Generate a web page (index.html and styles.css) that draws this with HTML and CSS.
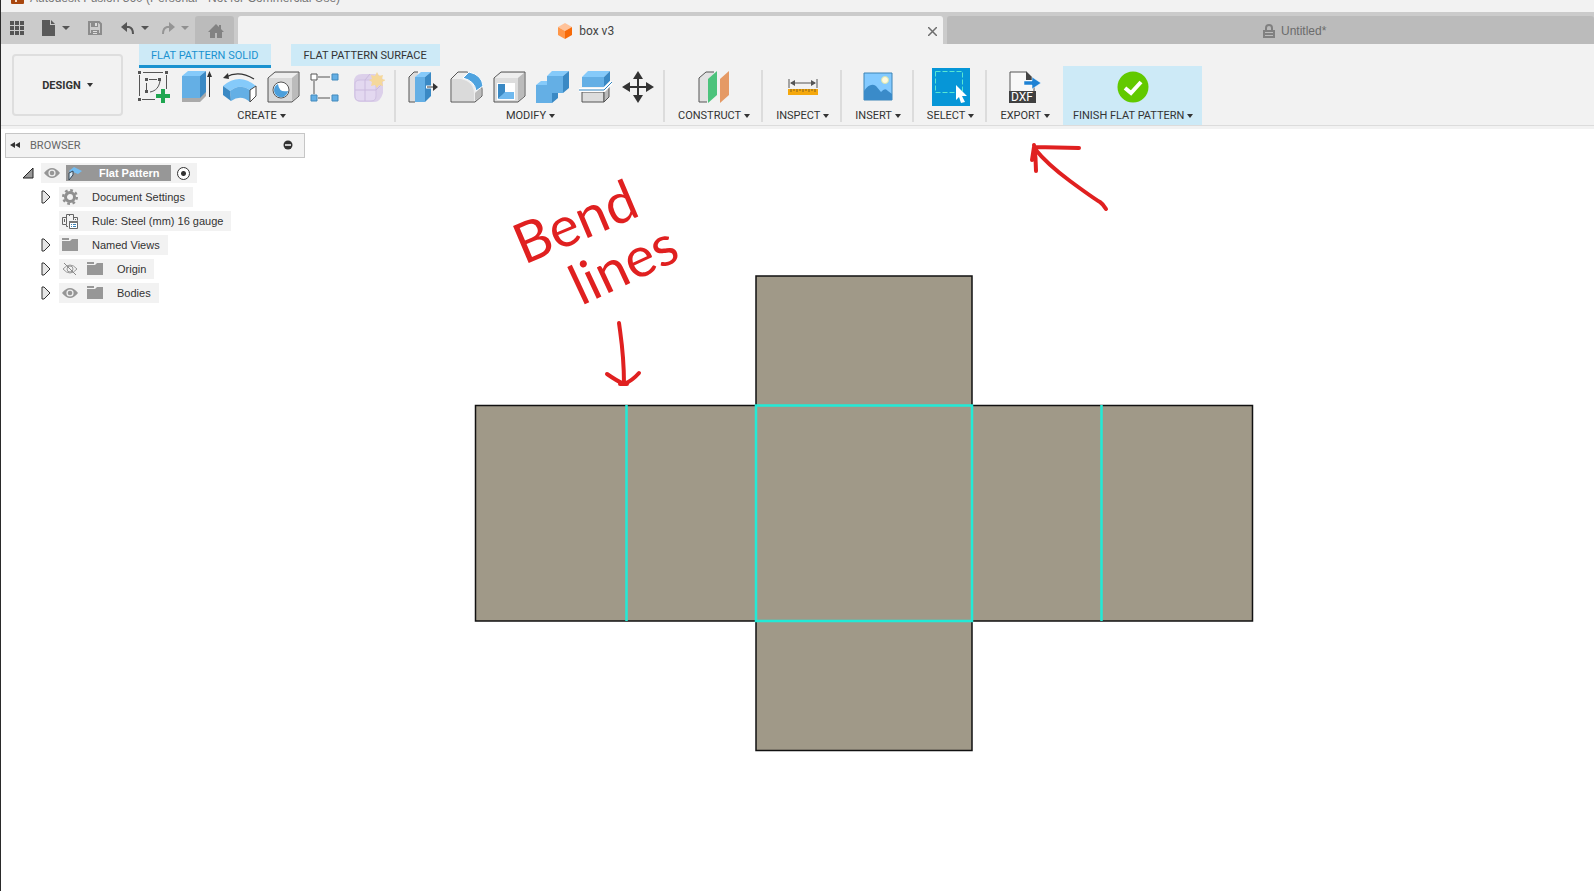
FILE: index.html
```
<!DOCTYPE html>
<html lang="en">
<head>
    <meta charset="UTF-8">
    <meta name="viewport" content="width=device-width, initial-scale=1.0">
    <title>Autodesk Fusion 360</title>
    <link rel="stylesheet" href="styles.css">
</head>
<body>
    <header class="titlebar">
        <svg class="app-icon" width="13" height="13" viewBox="0 0 13 13"><rect width="13" height="13" rx="1" fill="#a8470f"/><path d="M4 3h6v2H6v1h3v2H6v3H4z" fill="#f6d9c6"/></svg>
        <span class="app-title">Autodesk Fusion 360 (Personal - Not for Commercial Use)</span>
    </header>

    <div class="topbar">
        <div class="quick">
            <button class="q-btn q-grid" aria-label="Data panel"><svg width="15" height="15" viewBox="0 0 15 15" fill="#555"><path d="M0 0h4v4H0zM5 0h4v4H5zM10 0h4v4h-4zM0 5h4v4H0zM5 5h4v4H5zM10 5h4v4h-4zM0 10h4v4H0zM5 10h4v4H5zM10 10h4v4h-4z"/></svg></button>
            <button class="q-btn q-file" aria-label="File"><svg width="14" height="16" viewBox="0 0 14 16" fill="#5a5a5a"><path d="M0 0h8v5h5v11H0zM9 0l4 4H9z"/></svg><span class="caret"></span></button>
            <button class="q-btn q-save" aria-label="Save"><svg width="14" height="14" viewBox="0 0 14 14"><path d="M1 1h10l2 2v10H1z" fill="none" stroke="#8c8c8c" stroke-width="2"/><path d="M3 1h7v5H3zM3 9h8v4H3z" fill="#8c8c8c"/><path d="M7 2h2v3H7zM5 10h4v1H5zM5 12h4v1H5z" fill="#ddd"/></svg></button>
            <button class="q-btn q-undo" aria-label="Undo"><svg width="14" height="13" viewBox="0 0 14 13"><path d="M2 5h6q4 1 4 7" fill="none" stroke="#555" stroke-width="2"/><path d="M6 0v10L0 5z" fill="#555"/></svg><span class="caret"></span></button>
            <button class="q-btn q-redo" aria-label="Redo"><svg width="14" height="13" viewBox="0 0 14 13"><path d="M12 5H6Q2 6 2 12" fill="none" stroke="#959595" stroke-width="2"/><path d="M8 0v10l6-5z" fill="#959595"/></svg><span class="caret dim"></span></button>
        </div>
        <button class="home" aria-label="Home"><svg width="16" height="14" viewBox="0 0 16 14" fill="#828282"><path d="M8 0l3 3V1h2v4l3 3h-2v6H9V9H7v5H2V8H0z"/></svg></button>
        <nav class="doc-tabs">
            <div class="doc-tab active">
                <a class="doc-name" href="#"><svg width="15" height="16" viewBox="0 0 15 16"><path d="M7 0l7 4-7 4-7-4z" fill="#ffc299"/><path d="M0 4l7 4v8l-7-4z" fill="#ff9648"/><path d="M14 4L7 8v8l7-4z" fill="#f76a08"/></svg>box v3</a>
                <button class="close" aria-label="Close tab"><svg width="9" height="9" viewBox="0 0 9 9"><path d="M0 0l9 9M9 0L0 9" stroke="#6e6e6e" stroke-width="1.5"/></svg></button>
            </div>
            <div class="doc-tab">
                <a class="doc-name" href="#"><svg width="12" height="15" viewBox="0 0 12 15"><path d="M3 6V4q0-3 3-3t3 3v2" fill="none" stroke="#808080" stroke-width="2"/><path d="M0 6h12v8H0z" fill="#808080"/><path d="M2 8.500h8M2 11.500h8" stroke="#bbb"/></svg>Untitled*</a>
            </div>
        </nav>
    </div>

    <section class="ribbon">
        <button class="design">DESIGN<span class="caret"></span></button>
        <div class="ribbon-main">
            <div class="ribbon-tabs">
                <a class="ribbon-tab active" href="#">FLAT PATTERN SOLID</a>
                <a class="ribbon-tab" href="#">FLAT PATTERN SURFACE</a>
            </div>
            <div class="groups">
                <div class="group create">
                    <div class="tools">
                        <button class="tool" aria-label="Create sketch"><svg width="32" height="32" viewBox="0 0 32 32"><path d="M5 1.500h20M28.500 4v14M1.500 4v21M4 28.500h13M11 8.500h8M8.500 12v7M12 21c6-1 9-5 10-11" fill="none" stroke="#555"/><path d="M0 0h3v3H0zM27 0h3v3h-3zM0 27h3v3H0zM7 7h3v3H7zM20 7h3v3h-3zM7 19h3v3H7z" fill="#555"/><path d="M23 18h4v5h5v4h-5v5h-4v-5h-5v-4h5z" fill="#1fa650"/></svg></button>
                        <button class="tool" aria-label="Extrude"><svg width="32" height="32" viewBox="0 0 32 32"><path d="M1 26h17l7-6v5l-6 6H1z" fill="#aaa"/><path d="M1 5h18v22H1z" fill="#64afe5"/><path d="M1 5l6-5h18l-6 5z" fill="#85cafa"/><path d="M19 5l6-5v21l-6 6z" fill="#3a89c4"/><path d="M28.500 26V3" stroke="#333"/><path d="M28.500 0l2.500 6h-5z" fill="#333"/></svg></button>
                        <button class="tool" aria-label="Bend"><svg width="34" height="32" viewBox="0 0 34 32"><path d="M3 6q13-7 28 2" fill="none" stroke="#333" stroke-width="1.3"/><path d="M0 7l5-5 1 6z" fill="#333"/><path d="M0 15Q16 1 33 15l-6 4Q17 12 7 20z" fill="#85cafa"/><path d="M7 20q10-8 20-1v12q-9-8-19-1z" fill="#64afe5"/><path d="M0 15l7 5 1 10-8-6z" fill="#3a89c4"/><path d="M27 19l6-4v10l-6 6z" fill="#fff" stroke="#444"/></svg></button>
                        <button class="tool" aria-label="Hole"><svg width="33" height="32" viewBox="0 0 33 32"><path d="M1 7l7-6h24v24l-7 6H1z" fill="#d9d9d9" stroke="#555"/><path d="M2 7l6-5h23l-6 5z" fill="#eee"/><path d="M25 7l6-5v23l-6 5z" fill="#bbb"/><circle cx="14" cy="19" r="8" fill="#fff" stroke="#555"/><path d="M11 13q1 9 10 7a7 7 0 1 1-10-7z" fill="#4c9fdb"/></svg></button>
                        <button class="tool" aria-label="Pattern"><svg width="32" height="32" viewBox="0 0 32 32"><path d="M8 6h12M4 10v13M8 27h12" stroke="#555"/><path d="M1 3h6v6H1z" fill="#fff" stroke="#555"/><path d="M22 3h6v6h-6zM1 24h6v6H1zM22 24h6v6h-6z" fill="#64afe5" stroke="#4389bb"/></svg></button>
                        <button class="tool" aria-label="Create form"><svg width="32" height="32" viewBox="0 0 32 32"><path d="M1 11q0-8 8-8h12q9 0 9 8v11q-3 10-10 9H8q-7 0-7-7z" fill="#dcd0ea"/><path d="M2 13q0-4 5-4h11q5 0 5 5v11q0 5-5 5H7q-5 0-5-5z" fill="#e3d8f0" stroke="#cfc0e2"/><path d="M12 9v21M2 19h21l6-6M12 9l5-6" fill="none" stroke="#cbbade"/><path d="M24 1l2 4 4-1-1 4 4 1-4 2 1 4-4-1-2 3-2-3-4 1 1-4-3-2 3-1-1-4 4 1z" fill="#f5d89b"/></svg></button>
                    </div>
                    <button class="menu">CREATE<span class="caret"></span></button>
                </div>
                <div class="group modify">
                    <div class="tools">
                        <button class="tool" aria-label="Press pull"><svg width="32" height="32" viewBox="0 0 32 32"><path d="M11 1H7L2 6v25h6" fill="#ddd" stroke="#555"/><path d="M8 6h10v25H8z" fill="#64afe5"/><path d="M8 6l6-5h10l-6 5z" fill="#85cafa"/><path d="M18 6l6-5v24l-6 6z" fill="#3a89c4"/><path d="M19 16h8" stroke="#fff" stroke-width="3"/><path d="M20 16h8" stroke="#333"/><path d="M26 12l5 4-5 4z" fill="#333"/></svg></button>
                        <button class="tool" aria-label="Fillet"><svg width="33" height="32" viewBox="0 0 33 32"><path d="M1 8l7-7h9q14 3 15 17v7l-7 6H1z" fill="#eee" stroke="#555"/><path d="M2 8h9q13 3 13 15v7H2z" fill="#dadada"/><path d="M25 22l6-6v9l-6 5z" fill="#bdbdbd"/><path d="M13 7l6-6q13 3 14 14l-7 5Q25 10 13 7z" fill="#4fa3df" stroke="#fff"/></svg></button>
                        <button class="tool" aria-label="Shell"><svg width="33" height="32" viewBox="0 0 33 32"><path d="M1 7l7-6h24v24l-7 6H1z" fill="#ddd" stroke="#555"/><path d="M2 7l6-5h23l-6 5z" fill="#eee"/><path d="M25 7l6-5v23l-6 5z" fill="#bbb"/><path d="M4 12h18v17H4z" fill="#fff"/><path d="M5 13h7v9l-7 6z" fill="#3a89c4"/><path d="M12 21h9v7H5z" fill="#70b9ee"/></svg></button>
                        <button class="tool" aria-label="Combine"><svg width="33" height="32" viewBox="0 0 33 32"><path d="M0 14h11V5h16v17H16v10H0z" fill="#64afe5"/><path d="M0 14l5-4h6v4zM11 5l5-5h17l-6 5z" fill="#85cafa"/><path d="M27 5l6-5v17l-6 5zM16 22h6v5l-6 5z" fill="#3a89c4"/></svg></button>
                        <button class="tool" aria-label="Split body"><svg width="33" height="32" viewBox="0 0 33 32"><path d="M3 21h22v10H3z" fill="#ddd" stroke="#555"/><path d="M25 21l5-5v10l-5 5z" fill="#bbb" stroke="#555"/><path d="M3 6h22v10H3z" fill="#64afe5"/><path d="M3 6l6-6h22l-6 6z" fill="#85cafa"/><path d="M25 6l6-6v10l-6 6z" fill="#3a89c4"/><path d="M0 19h25l8-8" fill="none" stroke="#fff" stroke-width="4"/><path d="M0 19h25l8-8" fill="none" stroke="#3184bf"/></svg></button>
                        <button class="tool" aria-label="Move"><svg width="32" height="32" viewBox="0 0 32 32"><path d="M16 6v20M6 16h20" stroke="#333" stroke-width="2"/><path d="M16 0l5 8H11zM16 32l5-8H11zM0 16l8-5v10zM32 16l-8-5v10z" fill="#333"/></svg></button>
                    </div>
                    <button class="menu">MODIFY<span class="caret"></span></button>
                </div>
                <div class="group">
                    <button class="tool" aria-label="Offset plane"><svg width="32" height="32" viewBox="0 0 32 32"><path d="M16 1H8L1 7v24h8" fill="#e2e2e2" stroke="#555"/><path d="M10 8l9-8v24l-9 8z" fill="#4cc37c"/><path d="M22 8l9-8v24l-9 8z" fill="#e59a65"/></svg></button>
                    <button class="menu">CONSTRUCT<span class="caret"></span></button>
                </div>
                <div class="group">
                    <button class="tool" aria-label="Measure"><svg width="30" height="32" viewBox="0 0 30 32"><path d="M1 8v9M29 8v9M3 12h24" stroke="#555"/><path d="M2 12l5-3v6zM28 12l-5-3v6z" fill="#555"/><path d="M0 18h30v6H0z" fill="#f5a80c"/><path d="M3 18v3M6 18v2M9 18v3M12 18v2M15 18v3M18 18v2M21 18v3M24 18v2M27 18v3" stroke="#85621a"/></svg></button>
                    <button class="menu">INSPECT<span class="caret"></span></button>
                </div>
                <div class="group">
                    <button class="tool" aria-label="Insert image"><svg width="30" height="32" viewBox="0 0 30 32"><path d="M1 2h28v27H1z" fill="#83caff" stroke="#3d84b6"/><path d="M1 20q6-9 12-5l5 6q4-5 7-1l4 3v6H1z" fill="#3a8bc9"/><circle cx="22" cy="9" r="3.5" fill="#fff9dc" stroke="#d5e5b0"/></svg></button>
                    <button class="menu">INSERT<span class="caret"></span></button>
                </div>
                <div class="group">
                    <button class="tool select-tool" aria-label="Select"><svg width="38" height="38" viewBox="0 0 38 38"><path d="M3.500 3.500h27v21h-27z" fill="none" stroke="#58e6d1" stroke-dasharray="5 2"/><path d="M24 17l11 11h-5l3 6-4 1-2-6-3 3z" fill="#fff"/></svg></button>
                    <button class="menu">SELECT<span class="caret"></span></button>
                </div>
                <div class="group export">
                    <button class="tool" aria-label="Export DXF"><svg width="33" height="32" viewBox="0 0 33 32"><path d="M1 22V1h16l8 8v13" fill="#f8f8f8" stroke="#555"/><path d="M17 0v9h9z" fill="#444"/><path d="M15 10h8V6l9 6-9 6v-4h-8z" fill="#1f82d4" stroke="#fff" stroke-width=".5"/><path d="M0 20h27v12H0z" fill="#404040"/><text class="dxf" x="2" y="30">DXF</text></svg></button>
                    <button class="menu">EXPORT<span class="caret"></span></button>
                </div>
                <div class="group finish">
                    <button class="tool" aria-label="Finish"><svg width="32" height="32" viewBox="0 0 32 32"><circle cx="16" cy="16" r="15.5" fill="#62c900"/><path d="M8 17l6 5 10-11" fill="none" stroke="#fff" stroke-width="4"/></svg></button>
                    <button class="menu">FINISH FLAT PATTERN<span class="caret"></span></button>
                </div>
            </div>
        </div>
    </section>

    <main class="workspace">
        <svg class="canvas" viewBox="1 129 1593 762">
            <!-- flat pattern faces -->
            <path class="sheet" d="M756 276h216v129.500h280.500v215.500H972v129.500H756V621H475.500V405.500H756z"/>
            <!-- bend lines -->
            <path class="bend" d="M756 405.500h216v215.500H756zM626.500 405v216M1101.500 405v216"/>
            <!-- hand-drawn notes -->
            <path class="ink" d="M619 323C622 345 624 355 624 384M607 374Q617 381 624 384Q632 381 639 373M620 384h7"/>
            <path class="ink" d="M1079 148L1034 147L1032 160M1034 145Q1036 158 1036 171M1035 149Q1047 164 1070 181T1100 202Q1103 204 1106 209"/>
            <text class="note" transform="translate(524 265) rotate(-23)">Bend</text>
            <text class="note" transform="translate(581 306) rotate(-25)">lines</text>
        </svg>

        <aside class="browser">
            <div class="browser-head">
                <svg width="10" height="6" viewBox="0 0 10 6" fill="#333"><path d="M5 0v6L0 3zM10 0v6L5 3z"/></svg>
                <span class="browser-title">BROWSER</span>
                <button class="collapse" aria-label="Hide browser"><svg width="10" height="10" viewBox="0 0 10 10"><circle cx="5" cy="5" r="4.5" fill="#333"/><path d="M2 5h6" stroke="#fff" stroke-width="1.5"/></svg></button>
            </div>
            <ul class="tree">
                <li class="row root">
                    <button class="toggle" aria-label="Collapse"><svg width="12" height="12" viewBox="0 0 12 12"><path d="M11 1v10H1z" fill="#999" stroke="#222"/></svg></button>
                    <div class="chip">
                        <svg width="16" height="16" viewBox="0 0 16 16"><use href="#eye"/></svg>
                        <span class="selected"><svg width="16" height="16" viewBox="0 0 16 16"><path d="M3 6l5-4 8 4-4 3-5-2-2 1z" fill="#73bdf2"/><path d="M3 8l4-2v4l-4 5z" fill="#d5e8f5" stroke="#345"/></svg>Flat Pattern</span>
                        <label class="activate"><input type="radio" name="active" checked aria-label="Activate Flat Pattern"></label>
                    </div>
                </li>
                <li class="row">
                    <button class="toggle" aria-label="Expand"><svg width="10" height="14" viewBox="0 0 10 14"><use href="#arrow"/></svg></button>
                    <div class="chip"><svg width="16" height="16" viewBox="0 0 16 16"><circle cx="8" cy="8" r="4.5" fill="none" stroke="#8f8f8f" stroke-width="3"/><circle cx="8" cy="8" r="6.8" fill="none" stroke="#8f8f8f" stroke-width="2.4" stroke-dasharray="2.7 2.64"/></svg><span class="label">Document Settings</span></div>
                </li>
                <li class="row">
                    <span class="toggle"></span>
                    <div class="chip"><svg width="16" height="16" viewBox="0 0 16 16"><path d="M6 13.500H4.500v-2h-4v-7h4v-3h7v3h4v3M4.500 4v7M11.500 4v3M2.500 6v3M13.500 6v1M7.500 1v2" fill="none" stroke="#666"/><path d="M7.500 8.500h8v7h-8z" fill="#fff" stroke="#666"/><path d="M7 8h9v2H7z" fill="#777"/><path d="M9 11.500h1M11 11.500h3M9 13.500h1M11 13.500h3" stroke="#3b83b8"/></svg><span class="label">Rule: Steel (mm) 16 gauge</span></div>
                </li>
                <li class="row">
                    <button class="toggle" aria-label="Expand"><svg width="10" height="14" viewBox="0 0 10 14"><use href="#arrow"/></svg></button>
                    <div class="chip"><svg width="16" height="16" viewBox="0 0 16 16"><use href="#folder"/></svg><span class="label">Named Views</span></div>
                </li>
                <li class="row">
                    <button class="toggle" aria-label="Expand"><svg width="10" height="14" viewBox="0 0 10 14"><use href="#arrow"/></svg></button>
                    <div class="chip"><svg width="16" height="16" viewBox="0 0 16 16"><path d="M1 8q7-8 14 0-7 8-14 0z" fill="none" stroke="#999"/><circle cx="8" cy="8" r="3" fill="none" stroke="#999"/><path d="M2 2l12 12" stroke="#888"/></svg><svg width="16" height="16" viewBox="0 0 16 16"><use href="#folder"/></svg><span class="label">Origin</span></div>
                </li>
                <li class="row">
                    <button class="toggle" aria-label="Expand"><svg width="10" height="14" viewBox="0 0 10 14"><use href="#arrow"/></svg></button>
                    <div class="chip"><svg width="16" height="16" viewBox="0 0 16 16"><use href="#eye"/></svg><svg width="16" height="16" viewBox="0 0 16 16"><use href="#folder"/></svg><span class="label">Bodies</span></div>
                </li>
            </ul>
        </aside>
    </main>

    <svg class="defs" width="0" height="0">
        <symbol id="eye" viewBox="0 0 16 16"><path d="M0 8q8-10 16 0-8 10-16 0z" fill="#969696"/><circle cx="8" cy="8" r="3.6" fill="#efefef"/><circle cx="8" cy="8" r="2.3" fill="#969696"/></symbol>
        <symbol id="folder" viewBox="0 0 16 16"><path d="M0 1h7v2H0zM0 4h8l2-2h6v12H0z" fill="#979797"/></symbol>
        <symbol id="arrow" viewBox="0 0 10 14"><path d="M1 1h2l6 6-6 6H1z" fill="#e6e6e6" stroke="#333"/></symbol>
    </svg>
</body>
</html>
```
FILE: styles.css
```
* {
    box-sizing: border-box;
}
body {
    margin: 0;
    min-height: 100vh;
    display: flex;
    flex-direction: column;
    border-left: 1px solid #2a2a2a;
    background-color: #fff;
    font-family: Roboto, "Liberation Sans", sans-serif;
    font-size: 11px;
    color: #333;
}
button {
    padding: 0;
    border: none;
    background: none;
    font: inherit;
    color: inherit;
    cursor: pointer;
}
a {
    color: inherit;
    text-decoration: none;
}
svg {
    display: block;
    flex: none;
}
.caret {
    display: inline-block;
    border: 3px solid transparent;
    border-top: 4px solid currentColor;
    border-bottom: 0;
}

/* title bar, cut by the top of the window */
.titlebar {
    height: 12px;
    display: flex;
    align-items: flex-end;
    gap: 6px;
    padding: 0 10px 8px;
    overflow: hidden;
    background-color: #f2f2f2;
}
.app-title {
    font-family: "Liberation Sans", sans-serif;
    font-size: 12px;
    line-height: 12px;
    color: #777;
    white-space: nowrap;
}

/* quick access and documents */
.topbar {
    height: 32px;
    display: flex;
    padding-top: 4px;
    background-color: #cbcbcb;
}
.quick {
    width: 194px;
    display: flex;
    align-items: center;
    padding: 0 8px 4px 9px;
    color: #555;
}
.q-btn {
    display: flex;
    align-items: center;
    gap: 6px;
}
.q-btn .caret {
    border-width: 4px 4px 0;
}
.caret.dim {
    color: #909090;
}
.q-file {
    margin-left: 17px;
}
.q-save {
    margin-left: 18px;
}
.q-undo {
    margin-left: 19px;
}
.q-redo {
    margin-left: 12px;
}
.home {
    width: 39px;
    display: flex;
    justify-content: center;
    padding: 8px 0 0 2px;
    border-radius: 3px 3px 0 0;
    background-color: #bbb;
}
.doc-tabs {
    flex: 1;
    display: grid;
    grid-template-columns: 12fr 11fr;
    gap: 4px;
    margin-left: 4px;
}
.doc-tab {
    display: flex;
    align-items: center;
    padding: 2px 6px 0;
    border-radius: 3px 3px 0 0;
    background-color: #bbb;
    color: #6b6b6b;
    font-family: "Liberation Sans", sans-serif;
    font-size: 12px;
}
.doc-tab.active {
    background-color: #f2f2f2;
    color: #444;
    font-family: Roboto, sans-serif;
}
.doc-name {
    flex: 1;
    display: flex;
    justify-content: center;
    align-items: center;
    gap: 6px;
    padding-left: 48px;
}
.active .doc-name {
    padding-left: 0;
}

/* ribbon */
.ribbon {
    height: 85px;
    display: flex;
    padding-left: 11px;
    background: linear-gradient(#dcdcdc, #dcdcdc) 0 81px / 100% 1px no-repeat #f2f2f2;
}
.design {
    width: 111px;
    height: 62px;
    margin-top: 10px;
    border: 2px solid #dedede;
    border-radius: 4px;
    font-weight: bold;
}
.design .caret {
    margin: 0 0 2px 6px;
}
.ribbon-main {
    flex: 1;
}
.ribbon-tabs {
    display: flex;
    gap: 20px;
    margin-left: 16px;
}
.ribbon-tab {
    height: 22px;
    padding: 0 13px 0 12px;
    line-height: 23px;
    background-color: #cdeaf7;
}
.ribbon-tab.active {
    height: 24px;
    border-bottom: 3px solid #1a92d0;
    color: #1a92d0;
}
.groups {
    display: flex;
    margin-top: -2px;
    padding-left: 5px;
}
.group {
    position: relative;
    height: 59px;
    display: flex;
    flex-direction: column;
    align-items: center;
    justify-content: space-between;
    padding: 5px 13px 2px;
}
.group::after {
    content: "";
    position: absolute;
    right: 0;
    top: 4px;
    bottom: 3px;
    width: 2px;
    background-color: #dcdcdc;
}
.group.export::after,
.group.finish::after {
    display: none;
}
.group.create {
    padding-left: 10px;
    padding-right: 11px;
}
.group.modify {
    padding-left: 11px;
    padding-right: 11px;
}
.tools {
    display: flex;
    gap: 11px;
}
.tool {
    height: 32px;
    display: flex;
    justify-content: center;
    align-items: center;
}
.tools .tool {
    width: 32px;
}
.select-tool {
    height: 38px;
    margin: -3px 0;
    background-color: #0696d7;
}
.dxf {
    font-family: Roboto, sans-serif;
    font-size: 12px;
    fill: #fff;
}
.menu {
    display: flex;
    align-items: center;
    gap: 3px;
    line-height: 15px;
    white-space: nowrap;
}
.group.finish {
    padding-left: 10px;
    padding-right: 9px;
    background-color: #cdeaf7;
}

/* canvas */
.workspace {
    position: relative;
    flex: 1;
}
.canvas {
    position: absolute;
    width: 100%;
    height: 100%;
}
.sheet {
    fill: #a09988;
    stroke: #111;
    stroke-width: 1.5;
}
.bend {
    fill: none;
    stroke: #22ead6;
    stroke-width: 2.5;
}
.ink {
    fill: none;
    stroke: #e02020;
    stroke-width: 4;
    stroke-linecap: round;
    stroke-linejoin: round;
}
.note {
    font-family: Lato, sans-serif;
    font-size: 56px;
    fill: #e02020;
}

/* browser panel */
.browser {
    position: relative;
    width: 300px;
    margin-left: 4px;
    padding-top: 4px;
    font-family: "Liberation Sans", sans-serif;
}
.browser-head {
    height: 25px;
    display: flex;
    align-items: center;
    padding: 0 11px 1px 4px;
    border: 1px solid #c6c6c6;
    background-color: #f2f2f2;
}
.browser-title {
    flex: 1;
    margin-left: 10px;
    font-family: Roboto, sans-serif;
    font-size: 11px;
    color: #666;
}
.tree {
    display: flex;
    flex-direction: column;
    gap: 4px;
    margin: 5px 0 0;
    padding: 0;
    list-style: none;
}
.row {
    height: 20px;
    display: flex;
    align-items: center;
    padding-left: 36px;
}
.row.root {
    padding-left: 17px;
}
.toggle {
    width: 18px;
}
.chip {
    height: 20px;
    display: flex;
    align-items: center;
    gap: 9px;
    padding: 0 8px 0 3px;
    background-color: #f2f2f2;
}
.root .chip {
    gap: 6px;
    margin-left: 1px;
    padding-right: 7px;
}
.label {
    margin-left: 5px;
}
.selected {
    height: 16px;
    display: flex;
    align-items: center;
    gap: 17px;
    padding-right: 11px;
    background-color: #979797;
    color: #fff;
    font-weight: bold;
}
.activate {
    display: flex;
}
.activate input {
    appearance: none;
    width: 13px;
    height: 13px;
    margin: 0;
    border: 1px solid #333;
    border-radius: 50%;
    background: radial-gradient(#333 0 2px, #fff 3px);
}
.defs {
    position: absolute;
}
```
